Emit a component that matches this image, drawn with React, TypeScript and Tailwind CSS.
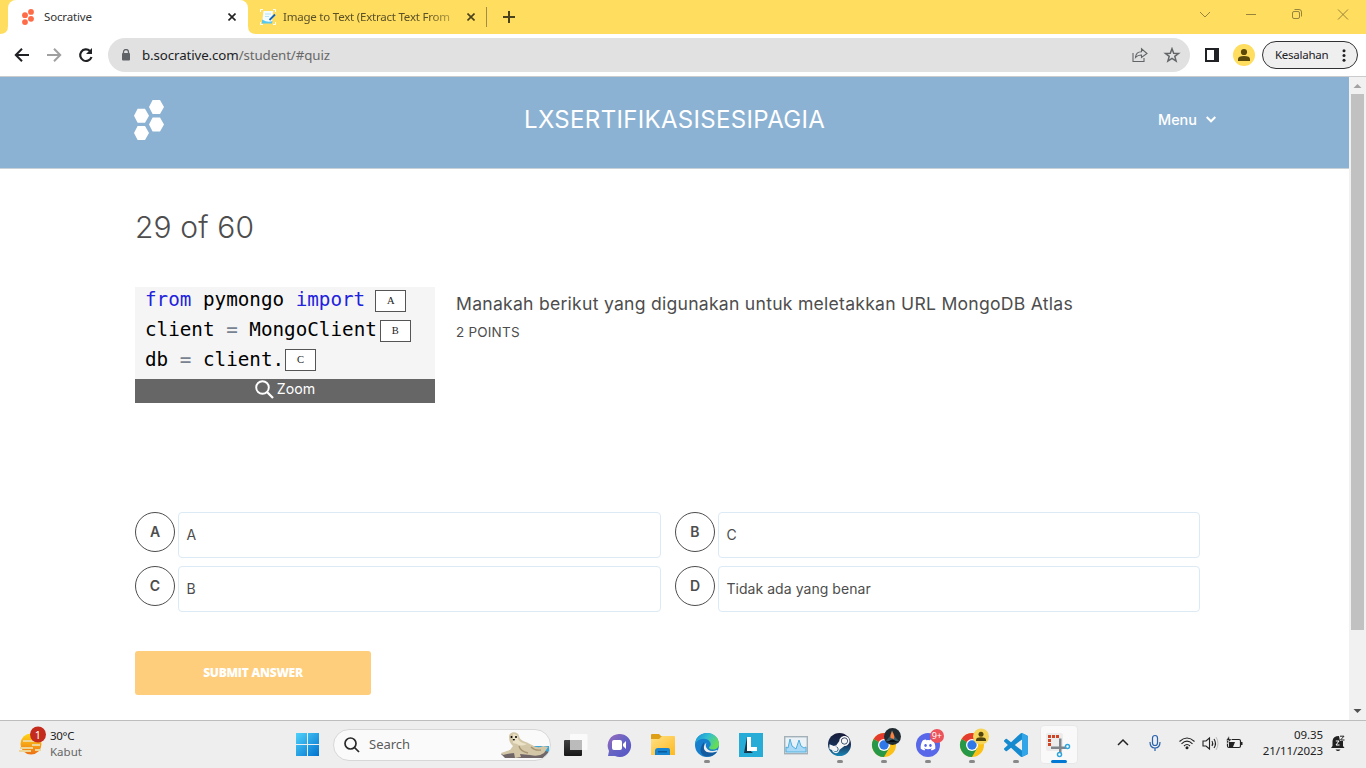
import React from "react";
import { FaDiscord, FaSteamSymbol } from "react-icons/fa";

const UI = "font-['Noto_Sans',sans-serif]";

function Hexes({ className, color }: { className: string; color: string }) {
  const hex = (x: number, y: number) =>
    `M${x} ${y + 7}L${x + 3.6} ${y}H${x + 11}L${x + 15} ${y + 7}L${x + 11} ${y + 14}H${x + 3.6}Z`;
  return (
    <svg className={className} viewBox="0 0 30 40" fill={color}>
      <path d={[hex(15, 0), hex(0, 8.7), hex(15, 17.4), hex(0, 26)].join("")} />
    </svg>
  );
}

function Cross({ className }: { className: string }) {
  return (
    <svg className={className} viewBox="0 0 8 8" fill="none" stroke="currentColor" strokeWidth="1.6">
      <path d="M.5 .5L7.5 7.5M7.5 .5L.5 7.5" />
    </svg>
  );
}

function TabStrip() {
  return (
    <div className={`flex h-[34px] shrink-0 bg-[#ffdd5e] pl-2 text-[12px] ${UI}`}>
      <div className="relative flex w-[240px] items-center rounded-t-[8px] bg-white pl-[14px]">
        <svg className="absolute bottom-0 -left-2 size-2" viewBox="0 0 8 8"><path d="M8 0V8H0Q8 8 8 0" fill="white" /></svg>
        <svg className="absolute -right-2 bottom-0 size-2" viewBox="0 0 8 8"><path d="M0 0V8H8Q0 8 0 0" fill="white" /></svg>
        <svg className="h-4 w-[12px]" viewBox="0 0 12 16" fill="#ff6b47">
          <circle cx="9" cy="2.9" r="2.9" /><circle cx="3" cy="6.2" r="2.9" /><circle cx="9" cy="9.8" r="2.9" /><circle cx="3" cy="13.1" r="2.9" />
        </svg>
        <span className="ml-[10px] text-[11.5px] tracking-[-0.15px] text-[#333]">Socrative</span>
        <Cross className="mr-[12px] ml-auto size-2 text-[#222]" />
      </div>
      <div className="flex w-[238px] items-center pl-[12px]">
        <svg className="size-4 shrink-0" viewBox="0 0 16 16">
          <path d="M.5 3V.5H3M13 .5H15.500V3M.5 13V15.500H3M13 15.500H15.500V13" fill="none" stroke="#fff" />
          <path d="M3.500 2H13L12 14H2Z" fill="#f2fbff" /><path d="M2 10.500L2 14.500H12L12.500 12Q8 14 2 10.500" fill="#56c7ee" />
          <path d="M5 5H11M5 7.5H9" stroke="#b8e3f3" /><path d="M9.5 11L15 5.5" stroke="#1765bd" strokeWidth="1.800" />
        </svg>
        <span className="ml-[7px] w-[171px] overflow-hidden [mask-image:linear-gradient(to_right,black_145px,transparent_185px)] whitespace-nowrap text-[11.5px] tracking-[-0.22px] text-[#5b5129]">Image to Text (Extract Text From</span>
        <Cross className="ml-[13px] size-2 shrink-0 text-[#4a411e]" />
      </div>
      <div className="mt-[7px] h-5 w-px bg-[#a18d47]" />
      <svg className="mt-[11px] ml-[16px] size-3" viewBox="0 0 12 12" stroke="#4a411e" strokeWidth="2"><path d="M6 0V12M0 6H12" /></svg>
      <svg className="mt-[7px] mr-[16px] ml-auto h-[14px] w-[152px]" viewBox="0 0 152 14" fill="none" stroke="#8a793a" strokeWidth=".9">
        <path d="M2 5L7 10L12 5M48 7.5H58M140 2.5L150 12.5M150 2.5L140 12.5" />
        <rect x="94.5" y="4.5" width="7" height="7" rx="1.5" /><path d="M96.5 2.5H101Q103.5 2.5 103.5 5V9.5" />
      </svg>
    </div>
  );
}

function Toolbar() {
  return (
    <div className={`flex h-[43px] shrink-0 items-center border-b border-[#c9cbcc] bg-white pl-[14px] ${UI}`}>
      <svg className="h-4 w-20" viewBox="0 0 80 16" fill="none" strokeWidth="2">
        <path d="M15 8H2M8 1.8L1.8 8L8 14.2" stroke="#202124" />
        <path d="M33 8H46M40 1.8L46.2 8L40 14.2" stroke="#a0a0a0" />
        <path d="M76 4A5.8 5.8 0 1 0 77.5 10" stroke="#202124" strokeWidth="2.2" /><path d="M78 1V7H72Z" fill="#202124" />
      </svg>
      <div className="ml-[14px] flex h-[34px] w-[1082px] items-center rounded-full bg-[#e1e1e1] pl-[13px]">
        <svg className="h-[12px] w-[10px]" viewBox="0 0 10 12"><rect x="1" y="4" width="8" height="7.5" rx="1" fill="#5f6368" /><path d="M2.5 5V3A2.5 2.5 0 0 1 7.5 3V5" stroke="#5f6368" strokeWidth="1.3" fill="none" /></svg>
        <span className="mt-px ml-[11px] text-[13.3px] tracking-[-0.1px] text-[#202124]">b.socrative.com<span className="text-[#686868]">/student/#quiz</span></span>
        <svg className="mr-[9px] ml-auto h-4 w-[50px]" viewBox="0 0 50 16" fill="none" stroke="#626568" strokeWidth="1.3">
          <path d="M2 6V14.5H13V11M4.500 10.5Q5 4.7 10.500 4.7V1.8L16 6.5L10.500 10.5V8Q7 7.8 4.500 10.5Z" strokeWidth="1.1" />
          <path d="M41 1.7L42.7 6.2L47.6 6.4L43.8 9.4L45.1 14.1L41 11.4L36.9 14.1L38.2 9.4L34.4 6.4L39.3 6.2Z" strokeWidth="1.5" />
        </svg>
      </div>
      <svg className="ml-[15px] h-[14px] w-[14px]" viewBox="0 0 14 14"><path d="M0 0H14V14H0ZM2 2V12H9V2Z" fill="#202124" fillRule="evenodd" /></svg>
      <svg className="ml-[14px] size-[22px]" viewBox="0 0 22 22"><circle cx="11" cy="11" r="11" fill="#ffdd5e" /><circle cx="11" cy="8" r="3.1" fill="#594a0c" /><path d="M5 17V15Q5 12 11 12T17 15V17Z" fill="#594a0c" /></svg>
      <div className="ml-[7px] flex h-7 w-24 items-center rounded-full border border-[#303134] bg-[#efefef] pl-[12px] text-[11.5px] text-[#202124]">
        <span className="tracking-[-0.25px]">Kesalahan</span>
        <svg className="mr-[11px] ml-auto h-[13px] w-[4px]" viewBox="0 0 4 13" fill="#202124"><circle cx="2" cy="1.7" r="1.5" /><circle cx="2" cy="6.5" r="1.5" /><circle cx="2" cy="11.3" r="1.5" /></svg>
      </div>
    </div>
  );
}

const answers = [["A", "A"], ["B", "C"], ["C", "B"], ["D", "Tidak ada yang benar"]];

function Blank({ children, className }: { children: string; className: string }) {
  return <span className={`flex h-[22px] w-[31px] items-center justify-center border border-[#555] bg-white font-['Liberation_Serif',serif] text-[10.5px] text-[#222] ${className}`}>{children}</span>;
}

function Quiz() {
  return (
    <main className="flex w-[1349px] flex-col bg-white font-['Inter',sans-serif] text-[#4d4d4d]">
      <header className="flex h-[92px] shrink-0 items-start border-b border-[#c8d0d8] bg-[#8cb2d3] pl-[134px] text-white">
        <Hexes className="mt-[23px] h-10 w-[30px]" color="white" />
        <h1 className="mt-[25px] ml-[360px] w-[302px] text-[24px] leading-9 tracking-[0.33px] whitespace-nowrap">LXSERTIFIKASISESIPAGIA</h1>
        <div className="mt-[33px] ml-[332px] flex items-center text-[14.4px] leading-5 font-medium">
          Menu<svg className="mb-[2px] ml-[9px] h-[7px] w-[10px]" viewBox="0 0 10 7" fill="none" stroke="white" strokeWidth="2"><path d="M.7 1L5 5.3L9.3 1" /></svg>
        </div>
      </header>
      <div className="flex flex-col pl-[135px]">
        <h2 className="mt-[38px] text-[30px] leading-10 font-[350] tracking-[0.15px]">29 of 60</h2>
        <div className="mt-[40px] flex">
          <div className="flex h-[116px] w-[300px] flex-col bg-[#f5f5f5]">
            <div className="flex h-[92px] flex-col pl-[10px] font-['DejaVu_Sans_Mono',monospace] text-[19.25px] leading-[30px] whitespace-pre text-black">
              <div className="flex h-[30px] -translate-y-[2px]"><span><span className="text-[#2222dd]">from</span> pymongo <span className="text-[#2222dd]">import</span></span><Blank className="mt-[5px] ml-[10px]">A</Blank></div>
              <div className="flex h-[30px] -translate-y-[2px]"><span>client <span className="text-[#778391]">=</span> MongoClient</span><Blank className="mt-[5px] ml-[3px]">B</Blank></div>
              <div className="flex h-[30px] -translate-y-[2px]"><span>db <span className="text-[#778391]">=</span> client.</span><Blank className="mt-[4px] ml-px">C</Blank></div>
            </div>
            <div className="flex h-6 items-center justify-center bg-[#666] pb-[4px] text-[14.2px] text-white">
              <svg className="mr-[3px] h-[19px] w-[19px]" viewBox="0 0 19 19" fill="none" stroke="white" strokeWidth="1.9"><circle cx="7.5" cy="7.5" r="6.3" /><path d="M12 12L18 18" strokeWidth="2.3" /></svg>Zoom
            </div>
          </div>
          <div className="ml-[21px]">
            <p className="mt-[5px] text-[17.6px] leading-6 font-[380] tracking-[0.25px] whitespace-nowrap">Manakah berikut yang digunakan untuk meletakkan URL MongoDB Atlas</p>
            <p className="mt-[6px] text-[13.5px] leading-5 tracking-[0.2px]">2 POINTS</p>
          </div>
        </div>
        <div className="mt-[109px] grid grid-cols-[540px_525px] gap-y-2">
          {answers.map(([letter, text]) => (
            <div key={letter} className="flex h-[46px]">
              <span className="flex size-10 items-center justify-center rounded-full border border-[#4d4d4d] pb-px text-[14px] font-semibold">{letter}</span>
              <span className="ml-[3px] flex w-[483px] items-center rounded-[4px] border border-[#dceaf5] pb-px pl-[7.5px] text-[14px] font-[380] tracking-[0.05px]">{text}</span>
            </div>
          ))}
        </div>
        <button className="mt-[39px] h-11 w-[236px] rounded-[3px] bg-[#ffce7c] font-['Open_Sans',sans-serif] text-[12px] font-extrabold tracking-[-0.25px] text-white">SUBMIT ANSWER</button>
      </div>
    </main>
  );
}

function Scrollbar() {
  return (
    <div className="flex w-[17px] flex-col items-center bg-[#f1f1f1]">
      <svg className="h-[17px] w-[17px] shrink-0" viewBox="0 0 17 17"><path d="M4.5 11L8.5 7L12.5 11Z" fill="#a3a3a3" /></svg>
      <div className="h-[536px] w-[13px] bg-[#c1c1c1]" />
      <svg className="mt-auto h-[17px] w-[17px] shrink-0" viewBox="0 0 17 17"><path d="M4.5 6L8.5 10L12.5 6Z" fill="#505050" /></svg>
    </div>
  );
}

const iconBox = "size-6 overflow-visible";

function Chrome({ badge }: { badge: "fire" | "person" }) {
  return (
    <svg className={iconBox} viewBox="0 0 24 24">
      <circle cx="12" cy="12" r="12" fill="#fbc116" />
      <path d="M12 12L1.6 6A12 12 0 0 1 22.4 6Z" fill="#e33b2e" /><path d="M12 12L1.6 6A12 12 0 0 0 12 24L17.2 15Z" fill="#279847" />
      <circle cx="12" cy="12" r="6" fill="white" /><circle cx="12" cy="12" r="4.7" fill="#3078e8" />
      {badge === "fire" ? (
        <g><circle cx="20.5" cy="3.5" r="8.5" fill="#202b31" /><path d="M14 8L18 3L20 -3L23 4L27 8Z" fill="#385966" /><path d="M18.500 5Q18 2 20 -2Q23 3 22 6Z" fill="#ff7f3d" /><path d="M16 9Q20 4 25 9Z" fill="#0b0e12" /></g>
      ) : (
        <g><circle cx="21" cy="3.5" r="8" fill="#f7d558" /><circle cx="21" cy="1.2" r="2.5" fill="#51450f" /><path d="M16 8V6.5Q16.5 4.3 21 4.3T26 6.5V8Z" fill="#51450f" /></g>
      )}
    </svg>
  );
}

const apps: { name: string; dot?: boolean; icon: React.ReactNode }[] = [
  { name: "tasks", icon: <svg className={iconBox} viewBox="0 0 24 24"><defs><linearGradient id="tv" x2="0" y2="1"><stop stopColor="#424242" /><stop offset="1" stopColor="#171717" /></linearGradient></defs><rect x="1" y="7" width="18" height="16" rx="1" fill="url(#tv)" /><rect x="7" y="1" width="17.5" height="16" rx="1" fill="#fafafa" /><path d="M7 7H19V17H7Z" fill="#bbb" /></svg> },
  { name: "chat", icon: <svg className={iconBox} viewBox="0 0 24 24"><defs><linearGradient id="ch" x2="1" y2="1"><stop stopColor="#9c69bc" /><stop offset=".5" stopColor="#6564c4" /><stop offset="1" stopColor="#5552c5" /></linearGradient></defs><path d="M12 1A11.5 11.5 0 1 1 8 23H1L2 18A11.5 11.5 0 0 1 12 1Z" fill="url(#ch)" /><rect x="5" y="7" width="10" height="10" rx="2" fill="white" /><path d="M16 11L19 8V16L16 13Z" fill="white" /></svg> },
  { name: "files", icon: <svg className={iconBox} viewBox="0 0 24 24"><defs><linearGradient id="fi" x2="1" y2="1"><stop stopColor="#ffe187" /><stop offset="1" stopColor="#ffb91f" /></linearGradient></defs><path d="M0 2Q0 1 1 1H8L10 3H22V10H0Z" fill="#dc9f15" /><path d="M0 6H8L11 3H23Q24 3 24 4V22H0Z" fill="url(#fi)" /><path d="M4 22V18Q4 15 7 15H17Q19 15 19 17V22Z" fill="#1684d1" /><path d="M7 18H16V19.5H7Z" fill="#0d5a9b" /></svg> },
  { name: "edge", dot: true, icon: <svg className={iconBox} viewBox="0 0 24 24"><defs><linearGradient id="ed" x2="1" y2=".5"><stop stopColor="#1489da" /><stop offset=".5" stopColor="#32bed2" /><stop offset="1" stopColor="#65dd56" /></linearGradient></defs><circle cx="12" cy="12" r="12" fill="#1680cf" /><path d="M0 11C1 -3 22 -4 24 10C25 17 16 18 14 15C14 13 17 13 15 9C12 4 3 5 0 11Z" fill="url(#ed)" /><path d="M9 9Q8 21 22 19Q17 25 9 23Q2 18 9 9Z" fill="#135a9f" /><path d="M13 9Q10 10 11 14Q14 20 22 17L23 18Q21 19 20 19Q11 21 9 16Q8 11 13 9Z" fill="#eee" /></svg> },
  { name: "lightshot", icon: <svg className={iconBox} viewBox="0 0 24 24"><path d="M0 0H24V24H0Z" fill="#27acd8" /><path d="M8 4L5 20H14L8 15Z" fill="#17374a" /><path d="M8 4H12V14H18V18H8Z" fill="white" /></svg> },
  { name: "monitor", icon: <svg className={iconBox} viewBox="0 0 24 24"><rect x=".7" y="3.7" width="22.6" height="17" fill="#eaf2f7" stroke="#a4b0b8" strokeWidth="1.4" /><path d="M2 18V14L4 15L6 6L8 13L12 16L15 7L17 13L20 15L22 14V19H2Z" fill="#a9d9f6" stroke="#50aedd" /></svg> },
  { name: "steam", dot: true, icon: <span className="flex size-[23px] items-center justify-center overflow-hidden rounded-full bg-linear-to-b from-[#171b38] via-[#172f56] to-[#1488b8] text-[#f5f5f5]"><FaSteamSymbol className="size-[23px]" /></span> },
  { name: "chrome", dot: true, icon: <Chrome badge="fire" /> },
  { name: "discord", dot: true, icon: <span className="relative flex size-6 items-center justify-center rounded-full bg-[#5968e9] text-white"><FaDiscord className="mt-px size-[16px]" /><span className="absolute -top-1 -right-1 flex size-[14px] items-center justify-center rounded-full bg-[#ed535b] text-[9px] leading-none">9+</span></span> },
  { name: "chrome2", dot: true, icon: <Chrome badge="person" /> },
  { name: "code", dot: true, icon: <svg className={iconBox} viewBox="0 0 24 24"><path fill="#168acf" d="M23.15 2.587L18.21.21a1.494 1.494 0 0 0-1.705.29l-9.46 8.63-4.12-3.128a.999.999 0 0 0-1.276.057L.327 7.261A1 1 0 0 0 .326 8.74L3.899 12 .326 15.26a1 1 0 0 0 .001 1.479L1.65 17.94a.999.999 0 0 0 1.276.057l4.12-3.128 9.46 8.63a1.492 1.492 0 0 0 1.704.29l4.942-2.377A1.5 1.5 0 0 0 24 20.06V3.939a1.5 1.5 0 0 0-.85-1.352zm-5.146 14.861L10.826 12l7.178-5.448v10.896z" /><path d="M18 0L23 2.500Q24 3 24 4V20Q24 21 23 21.500L18 24Z" fill="#32a5e8" /></svg> },
];

function Taskbar() {
  return (
    <footer className={`flex h-12 shrink-0 items-center border-t border-[#bdbdbd] bg-[#eee] text-[11.5px] text-[#222] ${UI}`}>
      <svg className="mb-[5px] ml-[18px] h-[32px] w-[30px]" viewBox="0 0 30 32">
        <defs><linearGradient id="sun" x2="0" y2="1"><stop stopColor="#ffd718" /><stop offset="1" stopColor="#ed7014" /></linearGradient></defs>
        <circle cx="13" cy="18" r="10.5" fill="url(#sun)" /><path d="M5 15H17M14 19H22M2 22H15M1 25H13M17 24H23" stroke="#eed598" strokeWidth="1.8" />
        <circle cx="20" cy="8.5" r="8" fill="#c42b1c" /><text x="20" y="12.5" textAnchor="middle" fill="white" fontSize="11" fontFamily="Noto Sans">1</text>
      </svg>
      <div className="mb-[2px] ml-[2px] w-[200px] leading-4"><div className="tracking-[-0.3px]">30°C</div><div className="text-[#666]">Kabut</div></div>
      <svg className="ml-[46px] size-[23px]" viewBox="0 0 23 23"><defs><linearGradient id="win" x2="1" y2="1"><stop stopColor="#50d2fa" /><stop offset="1" stopColor="#0072cf" /></linearGradient></defs><path d="M0 0H11V11H0ZM12 0H23V11H12ZM0 12H11V23H0ZM12 12H23V23H12Z" fill="url(#win)" /></svg>
      <div className="ml-[14px] flex h-8 w-[218px] items-center overflow-hidden rounded-full border border-[#d7d7d7] bg-[#fafafa] pl-[10px]">
        <svg className="size-4" viewBox="0 0 16 16" fill="none" stroke="#292929" strokeWidth="1.7"><circle cx="6.5" cy="6.5" r="5.5" /><path d="M10.5 10.5L15 15" /></svg>
        <span className="ml-[9px] text-[13px] text-[#5b5b5b]">Search</span>
        <svg className="mr-px ml-auto h-[28px] w-[49px]" viewBox="0 0 49 28">
          <path d="M13 17Q14 14 20 15H49V22L42 27H7Z" fill="#39a5d9" /><path d="M1 23L11 19L38 18L49 21L43 27H5Z" fill="#706668" />
          <path d="M9 6C9 0 18 0 19 5C20 10 25 10 32 14Q38 18 43 15L48 16L44 22Q39 26 30 24L20 23L21 26L15 27L14 22L7 23L3 24L1 22L10 19L13 15Q9 12 9 6Z" fill="#d3c7a8" />
          <path d="M13 3Q18 3 18 8Q20 12 27 13Q21 16 17 13L13 12Z" fill="#ebe2c8" /><path d="M19 15Q20 20 28 22M31 16Q35 20 41 19" fill="none" stroke="#a79470" strokeWidth="1.3" />
          <circle cx="11.5" cy="6" r="1" /><circle cx="16" cy="6" r="1" /><path d="M12.5 8H15L14 10Z" />
        </svg>
      </div>
      <div className="flex pl-[2px]">
        {apps.map((app) => (
          <div key={app.name} className="relative flex h-[47px] w-[44.1px] items-center justify-center">
            {app.icon}
            {app.dot && <span className="absolute bottom-[5px] h-[3px] w-[6px] rounded-full bg-[#888]" />}
          </div>
        ))}
        <div className="relative my-[4px] ml-[2px] flex h-[39px] w-[38px] items-center justify-center rounded-[4px] border border-[#e8e8e8] bg-[#f9f9f9]">
          <svg className={iconBox} viewBox="0 0 24 24">
            <rect x="-1" y="0" width="17" height="18" rx="2" fill="#ececec" />
            <path d="M1 2H4V5H1ZM5 2H8V5H5ZM9 2H12V5H9ZM1 6H4V9H1ZM1 10H4V13H1Z" fill="#cf4525" />
            <path d="M12 5.500H14.500V20H12ZM4 13.500H20V16H4Z" fill="#7f858a" />
            <circle cx="20.500" cy="13.500" r="2" fill="white" stroke="#2ea5dc" strokeWidth="1.500" /><circle cx="12.500" cy="21.500" r="2" fill="white" stroke="#2ea5dc" strokeWidth="1.500" />
          </svg>
          <span className="absolute bottom-0 h-[3px] w-4 rounded-full bg-[#0078d4]" />
        </div>
      </div>
      <svg className="mb-[3px] ml-[38px] h-[20px] w-[130px]" viewBox="0 0 130 20" fill="none" stroke="#222" strokeWidth="1.2">
        <path d="M2 12L7 7L12 12" strokeWidth="1.5" />
        <g stroke="#2862ad"><rect x="36.5" y="2.5" width="5" height="10" rx="2.5" /><path d="M34 9Q34 15 39 15T44 9M39 15V18" /></g>
        <path d="M63.500 8.500Q71 1.500 78.500 8.500M65.500 10.8Q71 5.500 76.500 10.8M68 13Q71 10 74 13" strokeWidth="1.1" /><circle cx="71" cy="14.800" r="1.5" fill="#222" stroke="none" />
        <path d="M87 8H90L93.5 5V16L90 13H87ZM96 8Q97.5 10.5 96 13M98 6Q101 10.5 98 15" strokeWidth="1.1" /><path d="M100 4Q104 10.5 100 17" stroke="#bbb" strokeWidth="1" />
        <rect x="111.5" y="6.5" width="13" height="8" rx="1.5" /><path d="M113 9H119L117 14H113ZM125 9H126.500V12H125Z" fill="#222" stroke="none" /><path d="M113 3L110 7.500H113L111 11L116 6H113.500Z" fill="#222" stroke="#eee" strokeWidth=".5" />
      </svg>
      <div className="mb-[3px] ml-auto w-[66px] text-right leading-4 whitespace-nowrap tracking-[-0.1px]"><div>09.35</div><div className="-ml-1">21/11/2023</div></div>
      <svg className="mb-[2px] mr-[20px] ml-[8px] h-[17px] w-[15px] overflow-visible" viewBox="0 0 15 17" fill="#202020"><path d="M1.500 11V6Q2 1 8 1L9 6H12V11L13.500 13H0ZM4.500 14.500H9.500Q7 17.500 4.500 14.500Z" /><path d="M9 1.200H13L9.500 5H13.500" fill="none" stroke="#202020" /><path d="M4.800 6H8L5 10H8.500" fill="none" stroke="white" /></svg>
    </footer>
  );
}

export default function App() {
  return (
    <div className="flex h-[768px] w-[1366px] flex-col overflow-hidden bg-white">
      <TabStrip />
      <Toolbar />
      <div className="flex h-[643px] shrink-0"><Quiz /><Scrollbar /></div>
      <Taskbar />
    </div>
  );
}
